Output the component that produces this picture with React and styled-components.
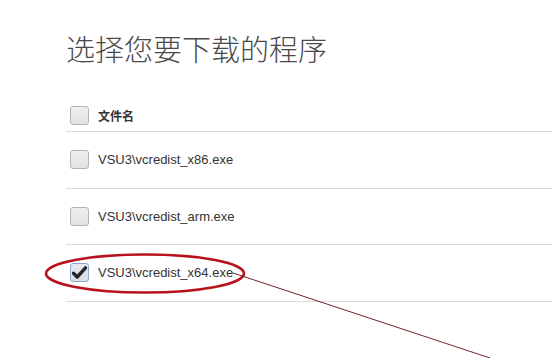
import React from "react";
import styled, { createGlobalStyle } from "styled-components";

const files = [
  { name: "VSU3\\vcredist_x86.exe", checked: false },
  { name: "VSU3\\vcredist_arm.exe", checked: false },
  { name: "VSU3\\vcredist_x64.exe", checked: true },
];

const App = () => {
  return (
    <Page>
      <GlobalStyle />
      <Title>选择您要下载的程序</Title>
      <List>
        <HeaderRow>
          <Box />
          <HeaderLabel>文件名</HeaderLabel>
        </HeaderRow>
        {files.map((f) => (
          <Row key={f.name}>
            <Box $checked={f.checked}>{f.checked && <Tick />}</Box>
            <FileName>{f.name}</FileName>
          </Row>
        ))}
      </List>

      {/* red hand-drawn annotation over the last row */}
      <Annotation width="552" height="358" viewBox="0 0 552 358">
        <ellipse cx="145" cy="273.5" rx="99" ry="19" fill="none" stroke="#b8131c" strokeWidth="2.6" />
        <line x1="233" y1="273" x2="490" y2="358" stroke="#7a2222" strokeWidth="1" />
      </Annotation>
    </Page>
  );
};

const Tick = () => (
  <svg width="15" height="13" viewBox="0 0 15 13">
    <path d="M1.5 7.2 L5.2 11 L13.5 1.8" fill="none" stroke="#262626" strokeWidth="3.4" strokeLinejoin="round" strokeLinecap="round" />
  </svg>
);

const GlobalStyle = createGlobalStyle`
  html, body { margin: 0; padding: 0; background: #fff; }
  body { font-family: "Liberation Sans", "Noto Sans CJK SC", sans-serif; }
`;

const Page = styled.div`
  position: relative;
  width: 552px;
  height: 358px;
  overflow: hidden;
  padding-left: 66px;
  box-sizing: border-box;
  background: #fff;
`;

const Title = styled.h1`
  margin: 0;
  padding-top: 30px;
  font-family: "Noto Sans CJK SC", sans-serif;
  font-weight: 300;
  font-size: 29px;
  line-height: 36px;
  color: #4a4a4a;
`;

const List = styled.div`
  margin-top: 34px;
  display: flex;
  flex-direction: column;
`;

const Row = styled.div`
  display: flex;
  align-items: center;
  gap: 9px;
  box-sizing: border-box;
  height: 56.5px;
  padding-left: 4px;
  border-bottom: 1px solid #dadada;
`;

const HeaderRow = styled(Row)`
  height: 32px;
  padding-bottom: 1px;
`;

const Box = styled.div`
  width: 19px;
  height: 19px;
  box-sizing: border-box;
  flex: none;
  display: grid;
  place-items: center;
  border-radius: 3px;
  border: 1px solid ${(p) => (p.$checked ? "#8ea8cf" : "#b4b4b4")};
  background: ${(p) =>
    p.$checked
      ? "linear-gradient(#e4e8ef, #d9dde4)"
      : "linear-gradient(#efefef, #e2e2e2)"};
`;

const HeaderLabel = styled.span`
  font-family: "Noto Sans CJK SC", sans-serif;
  font-weight: 700;
  font-size: 12px;
  color: #333;
`;

const FileName = styled.span`
  font-family: "Liberation Sans", Arial, sans-serif;
  font-size: 13px;
  color: #333;
`;

const Annotation = styled.svg`
  position: absolute;
  left: 0;
  top: 0;
  pointer-events: none;
`;

export default App;
